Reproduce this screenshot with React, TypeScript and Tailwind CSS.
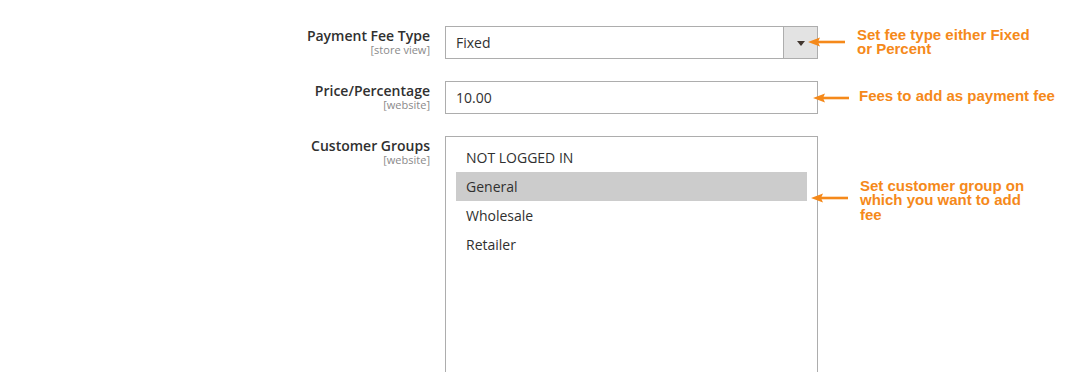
import React from "react";

const ORANGE = "#f5891a";

function Arrow({ width }: { width: number }) {
  return (
    <svg width={width} height={12} viewBox={`0 0 ${width} 12`} className="block">
      <polygon points="0,6 12,1.5 10,6 12,10.5" fill={ORANGE} />
      <line x1={9} y1={6} x2={width} y2={6} stroke={ORANGE} strokeWidth={2.6} />
    </svg>
  );
}

function Label({ label, scope }: { label: string; scope: string }) {
  return (
    <div className="w-[430px] shrink-0 pt-[2px] text-right">
      <div className="text-[14px] font-semibold leading-[16px] text-[#303030]">{label}</div>
      <div className="text-[11px] leading-[12px] text-[#8a8a8a]">{scope}</div>
    </div>
  );
}

function Note({ lines }: { lines: string[] }) {
  return (
    <div
      className="whitespace-nowrap text-[15px] font-bold leading-[14.5px]"
      style={{ color: ORANGE, fontFamily: '"Liberation Sans", Arial, sans-serif' }}
    >
      {lines.map((l, i) => (
        <div key={i}>{l}</div>
      ))}
    </div>
  );
}

export default function App() {
  const options = ["NOT LOGGED IN", "General", "Wholesale", "Retailer"];
  return (
    <div
      className="h-[372px] w-full overflow-hidden bg-white pt-[26px]"
      style={{ fontFamily: '"Open Sans", "Noto Sans", sans-serif' }}
    >
      {/* Row 1 */}
      <div className="flex items-start">
        <Label label="Payment Fee Type" scope="[store view]" />
        <div className="ml-[15px] flex h-[33px] w-[373px] shrink-0 border border-[#adadad] bg-white">
          <div className="flex flex-1 items-center pl-[10px] text-[14px] text-[#303030]">Fixed</div>
          <div className="flex w-[34px] items-center justify-center border-l border-[#adadad] bg-[#e3e3e3]">
            <svg width="8" height="5" viewBox="0 0 8 5" className="mt-[1px]">
              <polygon points="0,0 8,0 4,5" fill="#41362f" />
            </svg>
          </div>
        </div>
        <div className="relative flex-1">
          <div className="absolute left-[-10px] top-[10px]">
            <Arrow width={37} />
          </div>
          <div className="ml-[39px] mt-[1.5px]">
            <Note lines={["Set fee type either Fixed", "or Percent"]} />
          </div>
        </div>
      </div>

      {/* Row 2 */}
      <div className="mt-[22px] flex items-start">
        <Label label="Price/Percentage" scope="[website]" />
        <div className="ml-[15px] flex h-[33px] w-[373px] shrink-0 items-center border border-[#adadad] bg-white pl-[10px] text-[14px] text-[#303030]">
          10.00
        </div>
        <div className="relative flex-1">
          <div className="absolute left-[-5px] top-[11px]">
            <Arrow width={36} />
          </div>
          <div className="ml-[41px] mt-[7.5px]">
            <Note lines={["Fees to add as payment fee"]} />
          </div>
        </div>
      </div>

      {/* Row 3 */}
      <div className="mt-[22px] flex items-start">
        <Label label="Customer Groups" scope="[website]" />
        <div className="ml-[15px] h-[250px] w-[373px] shrink-0 border border-[#adadad] bg-white px-[10px] pt-[6px]">
          {options.map((o) => (
            <div
              key={o}
              className={`flex h-[29px] items-center pl-[10px] text-[14px] text-[#303030] ${
                o === "General" ? "bg-[#cccccc]" : ""
              }`}
            >
              {o}
            </div>
          ))}
        </div>
        <div className="relative flex-1">
          <div className="absolute left-[-7px] top-[56px]">
            <Arrow width={37} />
          </div>
          <div className="ml-[42px] mt-[42.5px]">
            <Note lines={["Set customer group on", "which you want to add", "fee"]} />
          </div>
        </div>
      </div>
    </div>
  );
}
